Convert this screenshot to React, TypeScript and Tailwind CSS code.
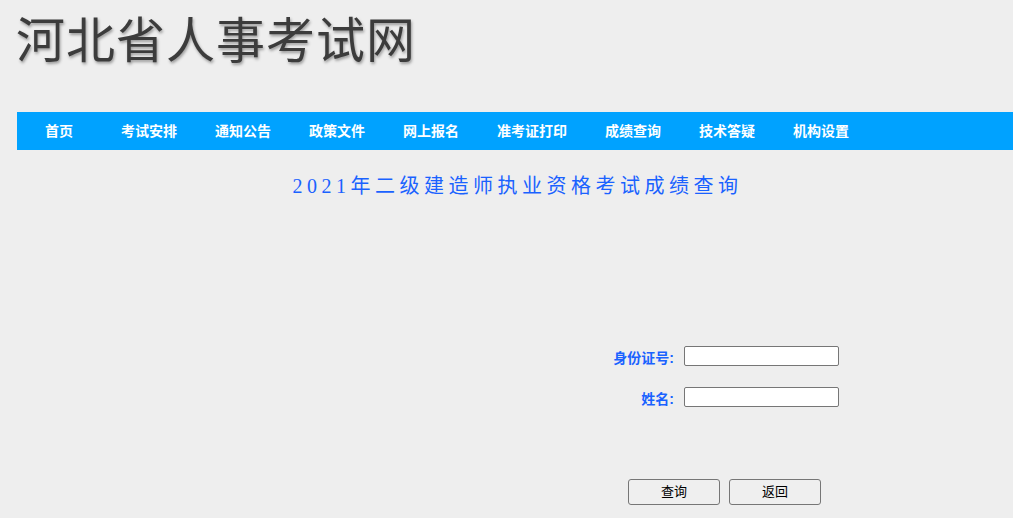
import React from 'react';

const navItems = ['首页', '考试安排', '通知公告', '政策文件', '网上报名', '准考证打印', '成绩查询', '技术答疑', '机构设置'];

const App = () => {
  return (
    <div className="min-h-[518px] w-full overflow-hidden bg-[#eeeeee] font-['Liberation_Sans','Noto_Sans_CJK_SC',sans-serif]">
      {/* 头部 */}
      <div className="h-[112px] pl-[16px] pt-[7px]">
        <h1 className="text-[49px] leading-[60px] tracking-[1px] text-[#3c3c3c] [text-shadow:1px_2px_3px_#9a9a9a] font-['Noto_Sans_CJK_SC',sans-serif] font-normal">
          河北省人事考试网
        </h1>
      </div>

      {/* 导航 */}
      <div className="ml-[17px] flex h-[38px] items-center bg-[#00a2ff] pl-[28px]">
        {navItems.map((item, i) => (
          <a
            key={item}
            className={`text-[14px] font-bold text-white whitespace-nowrap ${i === 0 ? 'mr-[29px]' : 'px-[19px]'}`}
          >
            {item}
          </a>
        ))}
      </div>

      {/* 标题 */}
      <div className="pl-[22px] pt-[22px] text-center">
        <h2 className="text-[20px] leading-[28px] tracking-[4.5px] text-[#1a62ff] font-['Liberation_Serif','Noto_Sans_CJK_SC',serif]">
          2021年二级建造师执业资格考试成绩查询
        </h2>
      </div>

      {/* 表单 */}
      <div className="ml-[584px] mt-[146px] grid grid-cols-[90px_auto] items-center gap-x-[10px] gap-y-[21px]">
        <label className="text-right text-[14px] leading-[20px] font-bold text-[#1a62ff] translate-y-[2px]">身份证号:</label>
        <input className="h-[20px] w-[155px] border border-[#767676] bg-white rounded-[2px]" />
        <label className="text-right text-[14px] leading-[20px] font-bold text-[#1a62ff] translate-y-[2px]">姓名:</label>
        <input className="h-[20px] w-[155px] border border-[#767676] bg-white rounded-[2px]" />
      </div>

      <div className="ml-[628px] mt-[72px] flex gap-[9px]">
        <button className="h-[26px] w-[92px] rounded-[3px] border border-[#767676] bg-[#efefef] text-[13px] text-black">
          查询
        </button>
        <button className="h-[26px] w-[92px] rounded-[3px] border border-[#767676] bg-[#efefef] text-[13px] text-black">
          返回
        </button>
      </div>
    </div>
  );
};

export default App;
